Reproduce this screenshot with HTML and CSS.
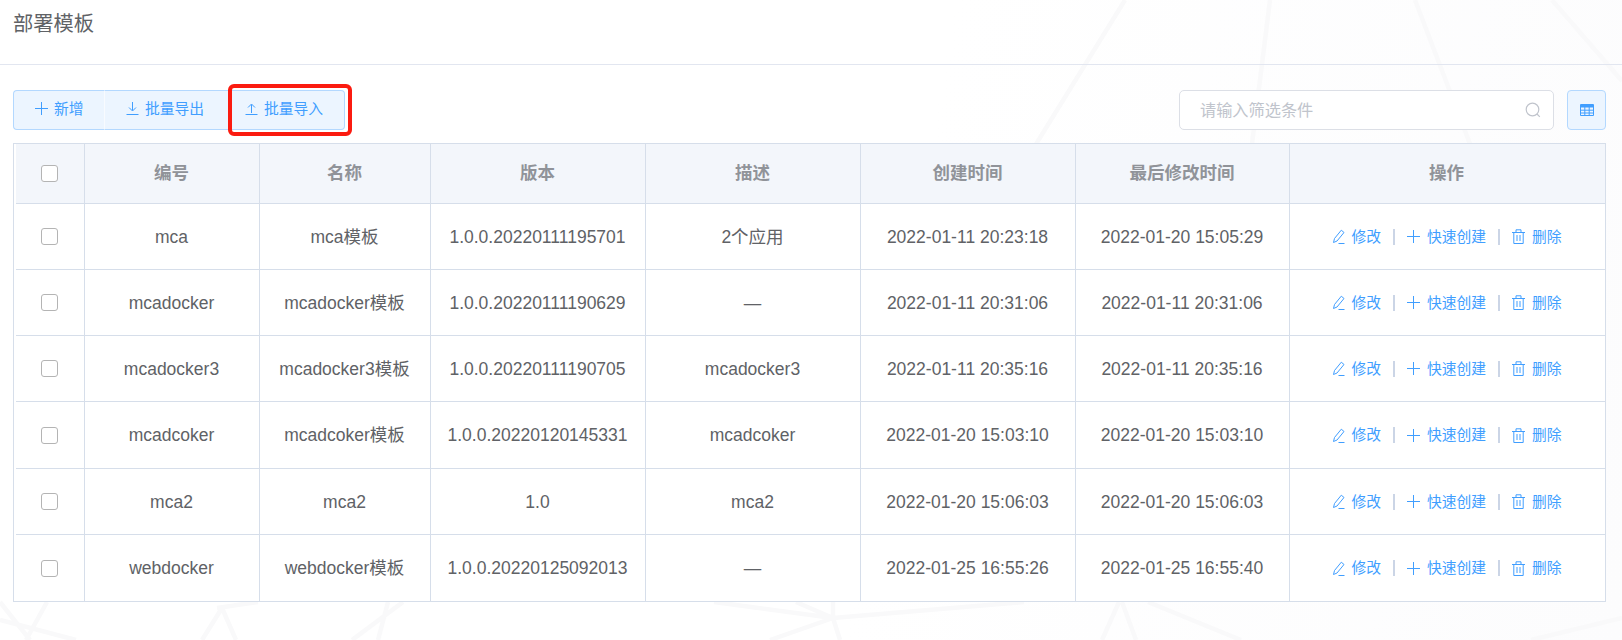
FILE: index.html
```html
<!DOCTYPE html>
<html lang="zh-CN">
<head>
<meta charset="utf-8">
<title>部署模板</title>
<link rel="stylesheet" href="styles.css">
</head>
<body>
<svg class="backdrop" width="1622" height="640" viewBox="0 0 1622 640" aria-hidden="true">
  <g class="mesh">
    <path d="M1125 0L952 280M1270 0L1235 280M1415 0L1522 280M1552 0L1622 81"/>
    <path d="M0 602L30 640M47 602L26 640M0 620L76 640"/>
    <path d="M222 608L202 640M222 608L236 640M217 608L258 602"/>
    <path d="M403 602L352 640M388 602L378 640"/>
    <path d="M714 602L833 618L1024 602M833 618L770 640M833 618L840 640M796 602L833 618M833 602V618"/>
    <path d="M1119 602L1102 640M1122 602L1136 640M1148 602L1241 640M1622 618L1531 640"/>
  </g>
</svg>
<main class="page">
  <header class="page-head"><h1 class="page-title">部署模板</h1></header>
  <section class="content">
    <div class="toolbar">
      <div class="btn-group">
        <button class="btn btn-add"><svg class="ico" viewBox="0 0 13 13"><path d="M6.500 0V13M0 6.500H13"/></svg>新增</button>
        <button class="btn btn-export"><svg class="ico" viewBox="0 0 13 13"><path d="M6.500 0V8.500M3 5.500L6.500 9L10 5.500M0.500 12.500H12.500"/></svg>批量导出</button>
        <button class="btn btn-import"><svg class="ico" viewBox="0 0 13 13"><path d="M6.500 11V2.500M3 5.500L6.500 2L10 5.500M0.500 12.500H12.500"/></svg>批量导入</button>
        <span class="callout"></span>
      </div>
      <div class="tools">
        <div class="search">
          <input class="search-input" placeholder="请输入筛选条件">
          <svg class="search-ico" viewBox="0 0 16 16"><circle cx="7.500" cy="7.500" r="6.300"/><path d="M12 12L14.800 14.800"/></svg>
        </div>
        <button class="btn-grid"><svg class="grid-ico" viewBox="0 0 14 12"><path class="grid-head" d="M0 1a1 1 0 0 1 1-1h12a1 1 0 0 1 1 1v2.500H0z"/><path class="grid-lines" d="M0.500 3V11.500H13.500V3M0.500 6.200H13.500M0.500 9H13.500M4.800 3V11.500M9.200 3V11.500"/></svg></button>
      </div>
    </div>
    <div class="table-wrap">
      <table class="grid">
        <colgroup>
          <col class="c1"><col class="c2"><col class="c3"><col class="c4"><col class="c5"><col class="c6"><col class="c7"><col>
        </colgroup>
        <thead>
          <tr><th><span class="check"></span></th><th>编号</th><th>名称</th><th>版本</th><th>描述</th><th>创建时间</th><th>最后修改时间</th><th>操作</th></tr>
        </thead>
        <tbody>
          <tr><td><span class="check"></span></td><td>mca</td><td>mca模板</td><td>1.0.0.20220111195701</td><td>2个应用</td><td>2022-01-11 20:23:18</td><td>2022-01-20 15:05:29</td><td><div class="ops"><a class="op"><svg class="ico ico-tall" viewBox="0 0 13 15"><path d="M2.500 9.500L1.500 13.500L5 12L12 3.500L9.300 1.200zM6.500 14.500H12.500"/></svg>修改</a><i class="sep"></i><a class="op"><svg class="ico" viewBox="0 0 13 13"><path d="M6.500 0V13M0 6.500H13"/></svg>快速创建</a><i class="sep"></i><a class="op"><svg class="ico ico-tall" viewBox="0 0 13 15"><path d="M0 3.500H13M4 3.500V0.800H9V3.500M1.800 3.500V14.500H11.200V3.500M5 6V12M8 6V12"/></svg>删除</a></div></td></tr>
          <tr><td><span class="check"></span></td><td>mcadocker</td><td>mcadocker模板</td><td>1.0.0.20220111190629</td><td>—</td><td>2022-01-11 20:31:06</td><td>2022-01-11 20:31:06</td><td><div class="ops"><a class="op"><svg class="ico ico-tall" viewBox="0 0 13 15"><path d="M2.500 9.500L1.500 13.500L5 12L12 3.500L9.300 1.200zM6.500 14.500H12.500"/></svg>修改</a><i class="sep"></i><a class="op"><svg class="ico" viewBox="0 0 13 13"><path d="M6.500 0V13M0 6.500H13"/></svg>快速创建</a><i class="sep"></i><a class="op"><svg class="ico ico-tall" viewBox="0 0 13 15"><path d="M0 3.500H13M4 3.500V0.800H9V3.500M1.800 3.500V14.500H11.200V3.500M5 6V12M8 6V12"/></svg>删除</a></div></td></tr>
          <tr><td><span class="check"></span></td><td>mcadocker3</td><td>mcadocker3模板</td><td>1.0.0.20220111190705</td><td>mcadocker3</td><td>2022-01-11 20:35:16</td><td>2022-01-11 20:35:16</td><td><div class="ops"><a class="op"><svg class="ico ico-tall" viewBox="0 0 13 15"><path d="M2.500 9.500L1.500 13.500L5 12L12 3.500L9.300 1.200zM6.500 14.500H12.500"/></svg>修改</a><i class="sep"></i><a class="op"><svg class="ico" viewBox="0 0 13 13"><path d="M6.500 0V13M0 6.500H13"/></svg>快速创建</a><i class="sep"></i><a class="op"><svg class="ico ico-tall" viewBox="0 0 13 15"><path d="M0 3.500H13M4 3.500V0.800H9V3.500M1.800 3.500V14.500H11.200V3.500M5 6V12M8 6V12"/></svg>删除</a></div></td></tr>
          <tr><td><span class="check"></span></td><td>mcadcoker</td><td>mcadcoker模板</td><td>1.0.0.20220120145331</td><td>mcadcoker</td><td>2022-01-20 15:03:10</td><td>2022-01-20 15:03:10</td><td><div class="ops"><a class="op"><svg class="ico ico-tall" viewBox="0 0 13 15"><path d="M2.500 9.500L1.500 13.500L5 12L12 3.500L9.300 1.200zM6.500 14.500H12.500"/></svg>修改</a><i class="sep"></i><a class="op"><svg class="ico" viewBox="0 0 13 13"><path d="M6.500 0V13M0 6.500H13"/></svg>快速创建</a><i class="sep"></i><a class="op"><svg class="ico ico-tall" viewBox="0 0 13 15"><path d="M0 3.500H13M4 3.500V0.800H9V3.500M1.800 3.500V14.500H11.200V3.500M5 6V12M8 6V12"/></svg>删除</a></div></td></tr>
          <tr><td><span class="check"></span></td><td>mca2</td><td>mca2</td><td>1.0</td><td>mca2</td><td>2022-01-20 15:06:03</td><td>2022-01-20 15:06:03</td><td><div class="ops"><a class="op"><svg class="ico ico-tall" viewBox="0 0 13 15"><path d="M2.500 9.500L1.500 13.500L5 12L12 3.500L9.300 1.200zM6.500 14.500H12.500"/></svg>修改</a><i class="sep"></i><a class="op"><svg class="ico" viewBox="0 0 13 13"><path d="M6.500 0V13M0 6.500H13"/></svg>快速创建</a><i class="sep"></i><a class="op"><svg class="ico ico-tall" viewBox="0 0 13 15"><path d="M0 3.500H13M4 3.500V0.800H9V3.500M1.800 3.500V14.500H11.200V3.500M5 6V12M8 6V12"/></svg>删除</a></div></td></tr>
          <tr><td><span class="check"></span></td><td>webdocker</td><td>webdocker模板</td><td>1.0.0.20220125092013</td><td>—</td><td>2022-01-25 16:55:26</td><td>2022-01-25 16:55:40</td><td><div class="ops"><a class="op"><svg class="ico ico-tall" viewBox="0 0 13 15"><path d="M2.500 9.500L1.500 13.500L5 12L12 3.500L9.300 1.200zM6.500 14.500H12.500"/></svg>修改</a><i class="sep"></i><a class="op"><svg class="ico" viewBox="0 0 13 13"><path d="M6.500 0V13M0 6.500H13"/></svg>快速创建</a><i class="sep"></i><a class="op"><svg class="ico ico-tall" viewBox="0 0 13 15"><path d="M0 3.500H13M4 3.500V0.800H9V3.500M1.800 3.500V14.500H11.200V3.500M5 6V12M8 6V12"/></svg>删除</a></div></td></tr>
        </tbody>
      </table>
    </div>
  </section>
</main>
</body>
</html>
```

FILE: styles.css
```css
* { box-sizing: border-box; }
html, body { margin: 0; height: 640px; overflow: hidden; }
body {
  position: relative;
  background: linear-gradient(100deg, #ffffff 55%, #fcfcfd 100%);
  font-family: "Liberation Sans", "Noto Sans CJK SC", sans-serif;
  color: #606266;
}
.backdrop { position: absolute; left: 0; top: 0; }
.mesh path { fill: none; stroke: #f9f9fa; stroke-width: 4.500; }
.page { position: relative; }
.page-head { height: 65px; border-bottom: 1px solid #e2e6f0; padding: 12px 13px 0; }
.page-title { margin: 0; font-size: 20.300px; font-weight: 400; line-height: 24px; color: #606266; }
.content { padding: 25px 16px 0 13px; }
.toolbar { display: flex; justify-content: space-between; align-items: center; height: 40px; }
.btn-group { position: relative; display: flex; height: 40px; }
.btn {
  display: flex; align-items: center; gap: 6px;
  height: 40px; padding: 0 0 3px 21px;
  background: #ecf5ff; color: #409eff;
  border: 1px solid #b3d8ff;
  font: inherit; font-size: 14.750px; line-height: 18px; white-space: nowrap;
}
.btn-add { width: 91px; border-right: 0; border-radius: 4px 0 0 4px; }
.btn-export { width: 120px; border-left: 1px solid #f8fbff; border-right: 0; }
.btn-import { width: 121px; border-left: 0; border-radius: 0 4px 4px 0; }
.ico { width: 13px; height: 13px; flex: none; fill: none; stroke: #409eff; stroke-width: 1; }
.ico-tall { height: 15px; }
.callout {
  position: absolute; left: 215px; top: -6px;
  width: 124px; height: 52px;
  border: 4px solid #fb1b10; border-radius: 6px;
}
.tools { display: flex; gap: 13px; }
.search { position: relative; width: 375px; height: 40px; }
.search-input {
  width: 100%; height: 40px; padding: 0 40px 0 20px;
  background: #fff; border: 1px solid #dcdfe6; border-radius: 5px;
  font: inherit; font-size: 16.200px; color: #606266; outline: 0;
}
.search-input::placeholder { color: #c0c4cc; opacity: 1; }
.search-ico {
  position: absolute; right: 13px; top: 12px;
  width: 16px; height: 16px; fill: none; stroke: #c0c4cc; stroke-width: 1.200;
}
.btn-grid {
  display: flex; align-items: center; justify-content: center;
  width: 39px; height: 40px; padding: 0;
  background: #ecf5ff; border: 1px solid #b3d8ff; border-radius: 4px;
}
.grid-ico { width: 14px; height: 12px; }
.grid-head { fill: #409eff; }
.grid-lines { fill: none; stroke: #409eff; stroke-width: 1; }
.table-wrap { margin-top: 13px; border: 1px solid #d6deea; padding-left: 2px; background: #fff; }
.grid {
  width: 100%; border-collapse: separate; border-spacing: 0; table-layout: fixed;
  font-size: 17.500px; line-height: 20px;
}
.c1 { width: 69px; } .c2 { width: 175px; } .c3 { width: 171px; } .c4 { width: 215px; }
.c5 { width: 215px; } .c6 { width: 215px; } .c7 { width: 214px; }
.grid th, .grid td {
  padding: 0 1px 0 0; text-align: center; white-space: nowrap;
  border-right: 1px solid #d6deea; border-bottom: 1px solid #d6deea;
}
.grid th:last-child, .grid td:last-child { border-right: 0; padding-right: 2px; }
.grid tr:last-child td { border-bottom: 0; }
.grid th { height: 60px; padding-bottom: 2px; background: #f3f6fb; color: #909399; font-weight: 700; }
.grid th:first-child { padding-bottom: 0; }
.grid td { height: 66px; color: #606266; }
.grid tbody tr:nth-child(4) td { height: 67px; }
.check {
  display: block; width: 17px; height: 17px; margin: 0 auto;
  background: #fff; border: 1px solid #b4b4b4; border-radius: 3px;
}
.ops { display: flex; justify-content: center; align-items: center; height: 18px; }
.op { display: flex; align-items: center; gap: 7px; color: #409eff; font-size: 14.750px; line-height: 18px; }
.sep { width: 2px; height: 16px; margin: 0 12px; background: #cbd5e6; }
```
